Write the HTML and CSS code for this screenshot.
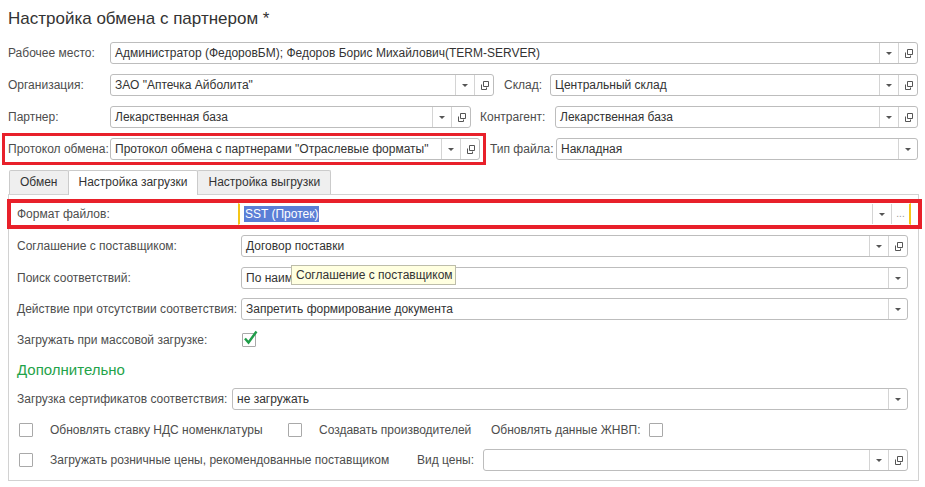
FILE: index.html
```html
<!DOCTYPE html>
<html lang="ru">
<head>
    <meta charset="UTF-8">
    <title>Настройка обмена с партнером</title>
    <link rel="stylesheet" href="styles.css">
</head>
<body>
    <div class="form">
        <h1 class="title">Настройка обмена с партнером *</h1>

        <div class="row">
            <span class="label label-main">Рабочее место:</span>
            <div class="field grow">
                <span class="value">Администратор (ФедоровБМ); Федоров Борис Михайлович(TERM-SERVER)</span>
                <span class="btn"><i class="arrow"></i></span>
                <span class="btn"><svg width="11" height="11" viewBox="0 0 11 11"><path d="M4.5 1.5h5v5h-5z M2.5 4.5v5h5v-2" fill="none" stroke="#555"/></svg></span>
            </div>
        </div>

        <div class="row">
            <span class="label label-main">Организация:</span>
            <div class="field w-org">
                <span class="value">ЗАО "Аптечка Айболита"</span>
                <span class="btn"><i class="arrow"></i></span>
                <span class="btn"><svg width="11" height="11" viewBox="0 0 11 11"><path d="M4.5 1.5h5v5h-5z M2.5 4.5v5h5v-2" fill="none" stroke="#555"/></svg></span>
            </div>
            <span class="label label-sklad">Склад:</span>
            <div class="field grow">
                <span class="value">Центральный склад</span>
                <span class="btn"><i class="arrow"></i></span>
                <span class="btn"><svg width="11" height="11" viewBox="0 0 11 11"><path d="M4.5 1.5h5v5h-5z M2.5 4.5v5h5v-2" fill="none" stroke="#555"/></svg></span>
            </div>
        </div>

        <div class="row">
            <span class="label label-main">Партнер:</span>
            <div class="field w-partner">
                <span class="value">Лекарственная база</span>
                <span class="btn"><i class="arrow"></i></span>
                <span class="btn"><svg width="11" height="11" viewBox="0 0 11 11"><path d="M4.5 1.5h5v5h-5z M2.5 4.5v5h5v-2" fill="none" stroke="#555"/></svg></span>
            </div>
            <span class="label label-kontr">Контрагент:</span>
            <div class="field grow">
                <span class="value">Лекарственная база</span>
                <span class="btn"><i class="arrow"></i></span>
                <span class="btn"><svg width="11" height="11" viewBox="0 0 11 11"><path d="M4.5 1.5h5v5h-5z M2.5 4.5v5h5v-2" fill="none" stroke="#555"/></svg></span>
            </div>
        </div>

        <div class="row">
            <div class="marked marked-protocol">
                <span class="label label-main">Протокол обмена:</span>
                <div class="field w-protocol">
                    <span class="value">Протокол обмена с партнерами "Отраслевые форматы"</span>
                    <span class="btn"><i class="arrow"></i></span>
                    <span class="btn"><svg width="11" height="11" viewBox="0 0 11 11"><path d="M4.5 1.5h5v5h-5z M2.5 4.5v5h5v-2" fill="none" stroke="#555"/></svg></span>
                </div>
            </div>
            <span class="label label-tip">Тип файла:</span>
            <div class="field grow">
                <span class="value">Накладная</span>
                <span class="btn"><i class="arrow"></i></span>
            </div>
        </div>

        <div class="tabs">
            <span class="tab">Обмен</span>
            <span class="tab active">Настройка загрузки</span>
            <span class="tab">Настройка выгрузки</span>
        </div>

        <div class="panel">
            <div class="row marked marked-format">
                <span class="label label-format">Формат файлов:</span>
                <div class="field grow focused">
                    <span class="value"><span class="selected">SST (Протек)</span></span>
                    <span class="btn"><i class="arrow"></i></span>
                    <span class="btn dots">...</span>
                </div>
            </div>

            <div class="row">
                <span class="label label-panel">Соглашение с поставщиком:</span>
                <div class="field grow">
                    <span class="value">Договор поставки</span>
                    <span class="btn"><i class="arrow"></i></span>
                    <span class="btn"><svg width="11" height="11" viewBox="0 0 11 11"><path d="M4.5 1.5h5v5h-5z M2.5 4.5v5h5v-2" fill="none" stroke="#555"/></svg></span>
                </div>
            </div>

            <div class="row">
                <span class="label label-panel">Поиск соответствий:</span>
                <div class="field grow">
                    <span class="value">По наименованию</span>
                    <span class="btn"><i class="arrow"></i></span>
                    <div class="tooltip">Соглашение с поставщиком</div>
                </div>
            </div>

            <div class="row">
                <span class="label label-panel">Действие при отсутствии соответствия:</span>
                <div class="field grow">
                    <span class="value">Запретить формирование документа</span>
                    <span class="btn"><i class="arrow"></i></span>
                </div>
            </div>

            <div class="row row-check">
                <span class="label label-panel">Загружать при массовой загрузке:</span>
                <span class="checkbox checked">
                    <svg width="18" height="18" viewBox="0 0 18 18"><path d="M3 9.5l3.5 4 8-11" fill="none" stroke="#1f9d49" stroke-width="2.4"/></svg>
                </span>
            </div>

            <h2 class="group">Дополнительно</h2>

            <div class="row">
                <span class="label label-cert">Загрузка сертификатов соответствия:</span>
                <div class="field grow">
                    <span class="value">не загружать</span>
                    <span class="btn"><i class="arrow"></i></span>
                </div>
            </div>

            <div class="row row-check">
                <span class="checkbox first"></span>
                <span class="label check-label nds">Обновлять ставку НДС номенклатуры</span>
                <span class="checkbox"></span>
                <span class="label check-label maker">Создавать производителей</span>
                <span class="label znvp">Обновлять данные ЖНВП:</span>
                <span class="checkbox"></span>
            </div>

            <div class="row">
                <span class="checkbox first"></span>
                <span class="label check-label prices">Загружать розничные цены, рекомендованные поставщиком</span>
                <span class="label label-vid">Вид цены:</span>
                <div class="field grow">
                    <span class="value"></span>
                    <span class="btn"><i class="arrow"></i></span>
                    <span class="btn"><svg width="11" height="11" viewBox="0 0 11 11"><path d="M4.5 1.5h5v5h-5z M2.5 4.5v5h5v-2" fill="none" stroke="#555"/></svg></span>
                </div>
            </div>
        </div>
    </div>
</body>
</html>
```

FILE: styles.css
```css
body {
    margin: 0;
    background: #fff;
    font-family: 'Liberation Sans', Arial, sans-serif;
    font-size: 12px;
    color: #333;
}
.form {
    padding: 0 7px 0 8px;
}
.title {
    margin: 0;
    padding-top: 9px;
    height: 42px;
    box-sizing: border-box;
    font-size: 17px;
    line-height: 20px;
    font-weight: normal;
    color: #333;
}
.row {
    display: flex;
    align-items: center;
    height: 22px;
    margin-bottom: 10px;
}
.label {
    color: #4d4d4d;
    white-space: nowrap;
    flex-shrink: 0;
}
.label-main { width: 102px; }
.label-sklad { width: 46px; margin-left: 10px; }
.label-kontr { width: 75px; margin-left: 9px; }
.label-tip { width: 66px; margin-left: 10px; }
.field {
    display: flex;
    align-items: stretch;
    height: 22px;
    box-sizing: border-box;
    border: 1px solid #bdbdbd;
    border-radius: 3px;
    background: #fff;
    position: relative;
}
.grow { flex: 1; min-width: 0; }
.w-org { width: 384px; }
.w-partner { width: 361px; }
.w-protocol { width: 370px; }
.value {
    flex: 1;
    padding: 0 4px;
    line-height: 20px;
    color: #333;
    white-space: nowrap;
    overflow: hidden;
}
.btn {
    width: 18px;
    border-left: 1px solid #d4d4d4;
    display: flex;
    align-items: center;
    justify-content: center;
}
.arrow {
    width: 0;
    height: 0;
    border-top: 3px solid #555;
    border-left: 3px solid transparent;
    border-right: 3px solid transparent;
}
.dots {
    color: #999;
    font-size: 10px;
    align-items: flex-end;
    padding-bottom: 5px;
    box-sizing: border-box;
}
.marked {
    display: flex;
    align-items: center;
    position: relative;
}
.marked::after {
    content: '';
    position: absolute;
    pointer-events: none;
    border: 3px solid #e8202a;
}
.marked-protocol::after {
    left: -6px;
    right: -6px;
    top: -5px;
    bottom: -5px;
}
.tabs {
    display: flex;
    padding-left: 1px;
    height: 24px;
    position: relative;
    z-index: 1;
}
.tab {
    box-sizing: border-box;
    height: 24px;
    line-height: 22px;
    padding: 0 10px;
    background: #efefef;
    border: 1px solid #cbcbcb;
    border-bottom: none;
    border-radius: 2px 2px 0 0;
    color: #333;
    margin-right: -1px;
}
.tab.active {
    background: #fff;
    height: 25px;
}
.panel {
    border: 1px solid #d2d2d2;
    height: 287px;
    box-sizing: border-box;
    margin-right: -1px;
    padding: 8px 10px 0 8px;
}
.panel .row {
    margin-bottom: 9px;
}
.panel .row:nth-child(-n+2) {
    margin-bottom: 10px;
}
.panel .row-check {
    margin-bottom: 8px;
}
.marked-format {
    margin-right: -3px;
}
.marked-format::after {
    left: -10px;
    right: -11px;
    top: -4px;
    bottom: -4px;
    border-width: 4px;
}
.label-format { width: 221px; }
.label-panel { width: 224px; }
.label-cert { width: 215px; }
.focused {
    border-color: #fff #f5c518;
    border-width: 1px 2px;
    border-radius: 0;
}
.selected {
    background: #5b7ed6;
    color: #fff;
    padding: 1px 1px;
}
.tooltip {
    position: absolute;
    left: 49px;
    top: -3px;
    width: 165px;
    height: 20px;
    box-sizing: border-box;
    background: #ffffe0;
    border: 1px solid #bdbdaa;
    line-height: 18px;
    padding-left: 4px;
    color: #333;
    white-space: nowrap;
    z-index: 2;
}
.checkbox {
    width: 14px;
    height: 14px;
    box-sizing: border-box;
    border: 1px solid #a9a9a9;
    border-radius: 1px;
    background: #fff;
    flex-shrink: 0;
    position: relative;
}
.checkbox svg {
    position: absolute;
    left: -1px;
    top: -5px;
}
.checkbox.checked {
    margin-left: 1px;
}
.group {
    margin: 0 0 7px 0;
    height: 22px;
    line-height: 22px;
    font-size: 15px;
    font-weight: normal;
    color: #1fa34a;
}
.checkbox.first { margin-left: 2px; }
.check-label { margin-left: 17px; }
.nds { width: 238px; }
.maker { width: 172px; }
.znvp { width: 158px; }
.prices { width: 367px; }
.label-vid { width: 66px; }
```
